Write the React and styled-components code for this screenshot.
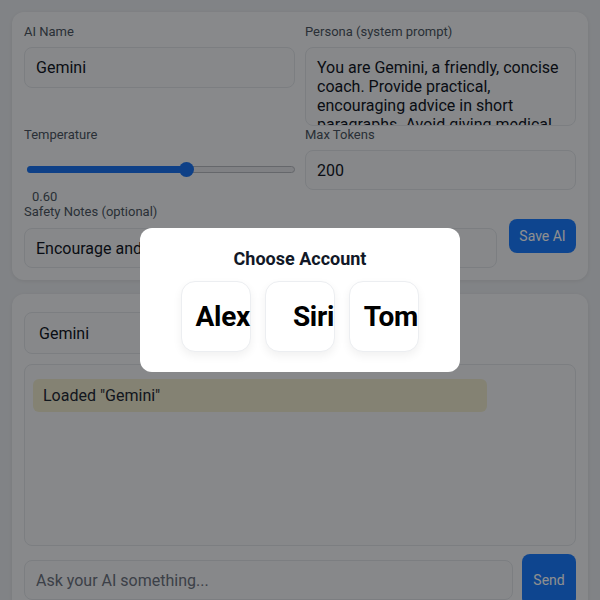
import React from "react";
import styled, { createGlobalStyle } from "styled-components";

const Global = createGlobalStyle`
  html, body { margin: 0; padding: 0; }
  body {
    background: #e7eaef;
    font-family: Roboto, "Liberation Sans", Arial, sans-serif;
    color: #111827;
    overflow: hidden;
  }
  * { box-sizing: border-box; }
`;

const Page = styled.div`
  display: flex;
  flex-direction: column;
  gap: 14px;
  padding: 12px;
  height: 600px;
`;

const Card = styled.section`
  background: #f3f5f8;
  border-radius: 12px;
  box-shadow: 0 1px 4px rgba(0, 0, 0, 0.08);
  padding: ${(p) => p.$pad || "12px"};
  display: flex;
  flex-direction: column;
  gap: ${(p) => p.$gap || "0px"};
`;

const Grid = styled.div`
  display: grid;
  grid-template-columns: 1fr 1fr;
  column-gap: 10px;
`;

const Field = styled.div`
  display: flex;
  flex-direction: column;
  flex: ${(p) => (p.$grow ? 1 : "initial")};
`;

const Label = styled.label`
  font-size: 13px;
  line-height: 15px;
  color: #4b5563;
  margin-top: ${(p) => p.$mt || "0px"};
  margin-bottom: ${(p) => p.$mb || "8px"};
`;

const Input = styled.div`
  height: ${(p) => p.$h || "41px"};
  border: 1px solid #dde1e7;
  border-radius: 8px;
  background: #f1f3f6;
  padding: 0 ${(p) => p.$px || "11px"};
  display: flex;
  align-items: center;
  font-size: 16px;
  color: ${(p) => (p.$placeholder ? "#6b7280" : "#111827")};
  white-space: nowrap;
  overflow: hidden;
  flex: ${(p) => (p.$grow ? 1 : "initial")};
  width: ${(p) => p.$w || "auto"};
`;

const TextArea = styled.div`
  height: 79px;
  border: 1px solid #dde1e7;
  border-radius: 8px;
  background: #f1f3f6;
  padding: 10px 11px;
  font-size: 16px;
  line-height: 19px;
  color: #111827;
  overflow: hidden;
`;

const SliderWrap = styled.div`
  height: 16px;
  margin: 19px 0 0 3px;
  display: flex;
  align-items: center;
`;

const Track = styled.div`
  position: relative;
  flex: 1;
  height: 7px;
  border-radius: 4px;
  background: #e5e7eb;
  border: 1px solid #b4b8bf;
`;

const Fill = styled.div`
  position: absolute;
  left: -1px;
  top: -1px;
  bottom: -1px;
  border-radius: 4px;
  background: #1a73f0;
`;

const Thumb = styled.div`
  position: absolute;
  top: 50%;
  width: 15px;
  height: 15px;
  margin: -7.5px 0 0 -9px;
  border-radius: 50%;
  background: #1a73f0;
`;

const Value = styled.div`
  font-size: 13px;
  line-height: 15px;
  color: #4b5563;
  margin: 12px 0 0 8px;
`;

const Row = styled.div`
  display: flex;
  align-items: center;
  gap: ${(p) => p.$gap || "12px"};
  margin-top: ${(p) => p.$mt || "0px"};
`;

const Button = styled.button`
  border: none;
  background: #1a7cff;
  color: #ffffff;
  font-family: inherit;
  font-size: 14px;
  border-radius: 8px;
  padding: 0;
  width: ${(p) => p.$w};
  height: ${(p) => p.$h};
  flex-shrink: 0;
`;

const ChatBox = styled.div`
  height: 182px;
  border: 1px solid #dde1e7;
  border-radius: 8px;
  background: #f1f3f6;
  padding: 14px 8px;
`;

const Bubble = styled.div`
  max-width: 85%;
  background: #ebe8cd;
  border-radius: 6px;
  padding: 0 10px;
  height: 33px;
  display: flex;
  align-items: center;
  font-size: 16px;
  color: #1f2937;
`;

const Backdrop = styled.div`
  position: fixed;
  inset: 0;
  background: rgba(0, 0, 0, 0.44);
  display: flex;
  align-items: flex-start;
  justify-content: center;
  padding-top: 228px;
`;

const Modal = styled.div`
  width: 320px;
  height: 144px;
  background: #ffffff;
  border-radius: 12px;
  display: flex;
  flex-direction: column;
  align-items: center;
  padding-top: 20px;
`;

const Title = styled.h2`
  margin: 0;
  font-size: 18px;
  line-height: 22px;
  font-weight: 700;
  color: #111827;
`;

const Accounts = styled.div`
  display: flex;
  gap: 14px;
  margin-top: 11px;
`;

const Account = styled.button`
  width: 70px;
  height: 71px;
  border-radius: 14px;
  border: 1px solid #eceef1;
  background: #ffffff;
  box-shadow: 0 4px 10px rgba(0, 0, 0, 0.06);
  display: flex;
  align-items: center;
  justify-content: flex-end;
  padding: 0;
  font-family: inherit;
  font-size: 28px;
  font-weight: 700;
  color: #000000;
  letter-spacing: -0.3px;
`;

export default function App() {
  const temp = 0.6;
  return (
    <>
      <Global />
      <Page>
        <Card>
          <Grid>
            <Field>
              <Label>AI Name</Label>
              <Input>Gemini</Input>
            </Field>
            <Field>
              <Label>Persona (system prompt)</Label>
              <TextArea>
                You are Gemini, a friendly, concise coach. Provide practical,
                encouraging advice in short paragraphs. Avoid giving medical
                diagnoses.
              </TextArea>
            </Field>
            <Field>
              <Label $mb="0px" $mt="1px">Temperature</Label>
              <SliderWrap>
                <Track>
                  <Fill style={{ width: `${temp * 100}%` }} />
                  <Thumb style={{ left: `${temp * 100}%` }} />
                </Track>
              </SliderWrap>
              <Value>0.60</Value>
            </Field>
            <Field>
              <Label $mt="1px">Max Tokens</Label>
              <Input $h="40px">200</Input>
            </Field>
          </Grid>
          <Row $gap="12px" $mt="0px">
            <Field $grow>
              <Label $mb="9px">Safety Notes (optional)</Label>
              <Input $h="40px">Encourage and stay positive.</Input>
            </Field>
            <Button $w="67px" $h="34px">Save AI</Button>
          </Row>
        </Card>
        <Card $pad="18px 12px 12px" $gap="10px" style={{ flex: 1 }}>
          <Input $h="42px" $w="240px" $px="14px">Gemini</Input>
          <ChatBox>
            <Bubble>Loaded "Gemini"</Bubble>
          </ChatBox>
          <Row $gap="9px" $mt="-2px">
            <Input $h="40px" $grow $placeholder>Ask your AI something...</Input>
            <Button $w="54px" $h="52px">Send</Button>
          </Row>
        </Card>
      </Page>
      <Backdrop>
        <Modal>
          <Title>Choose Account</Title>
          <Accounts>
            {["Alex", "Siri", "Tom"].map((n) => (
              <Account key={n}>{n}</Account>
            ))}
          </Accounts>
        </Modal>
      </Backdrop>
    </>
  );
}
